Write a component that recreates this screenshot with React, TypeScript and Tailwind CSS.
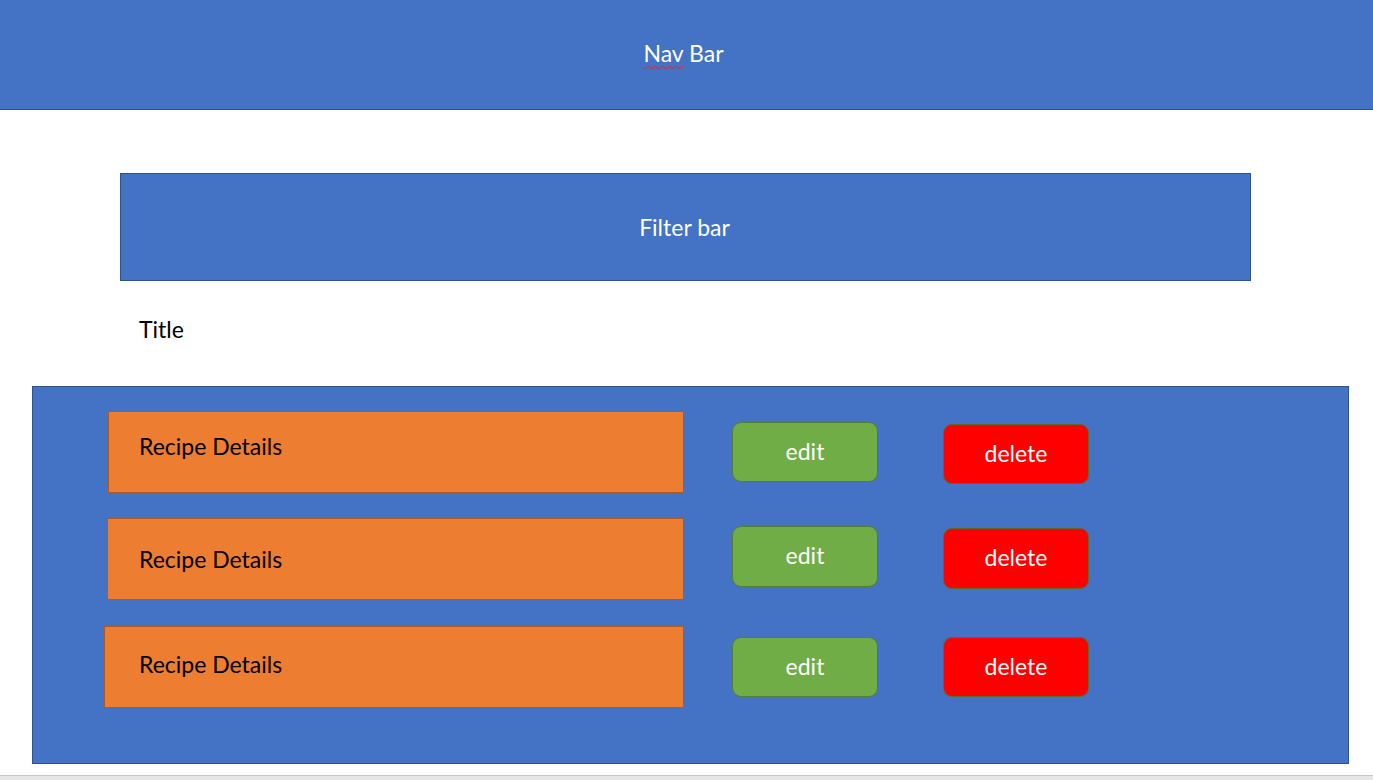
const rows = [
  { box: "ml-[75px] w-[576px] pl-[30px] pt-[19px]", gap: "mt-0", edit: "mt-[11px] h-[60px]", del: "mt-[13px] h-[60px]" },
  { box: "ml-[74px] w-[577px] pl-[31px] pt-[25px]", gap: "mt-[25px]", edit: "mt-[8px] h-[61px]", del: "mt-[10px] h-[61px]" },
  { box: "ml-[71px] w-[580px] pl-[34px] pt-[22px]", gap: "mt-[26px]", edit: "mt-[11px] h-[60px]", del: "mt-[11px] h-[60px]" },
];

function RecipeRow({ row }: { row: (typeof rows)[number] }) {
  return (
    <div className={`flex items-start ${row.gap}`}>
      <div
        className={`${row.box} h-[82px] shrink-0 border border-[#ae5a21] bg-[#ed7d31] text-[23px] leading-[30px] text-black`}
      >
        Recipe Details
      </div>
      <button
        className={`${row.edit} ml-[48px] w-[146px] rounded-[9px] border border-[#507e32] bg-[#70ad47] pb-[2px] text-[23px] text-white`}
      >
        edit
      </button>
      <button
        className={`${row.del} ml-[65px] w-[146px] rounded-[9px] border border-[#5c6a2e] bg-[#ff0000] pb-[2px] text-[23px] text-white`}
      >
        delete
      </button>
    </div>
  );
}

export default function App() {
  return (
    <div className="flex h-[780px] flex-col bg-white font-['Lato',sans-serif]">
      <nav className="flex h-[110px] items-center justify-center border-b border-[#2f528f] bg-[#4472c4] pb-[3px] pr-[6px] text-[23px] text-white">
        <span>
          <span className="underline decoration-[#e02424] decoration-wavy decoration-1 underline-offset-[3px]">
            Nav
          </span>{" "}
          Bar
        </span>
      </nav>

      <div className="ml-[120px] mt-[63px] flex h-[108px] w-[1131px] items-center justify-center border border-[#2f528f] bg-[#4472c4] pr-[2px] text-[23px] text-white">
        Filter bar
      </div>

      <h1 className="ml-[139px] mt-[33px] h-[30px] text-[23px] leading-[30px] text-black">
        Title
      </h1>

      <section className="ml-[32px] mt-[42px] h-[378px] w-[1317px] border border-[#2f528f] bg-[#4472c4] pt-[24px]">
        {rows.map((row, i) => (
          <RecipeRow key={i} row={row} />
        ))}
      </section>

      <div className="mt-auto h-[5px] border-t border-[#c8c8c8] bg-[#e6e6e6]" />
    </div>
  );
}
